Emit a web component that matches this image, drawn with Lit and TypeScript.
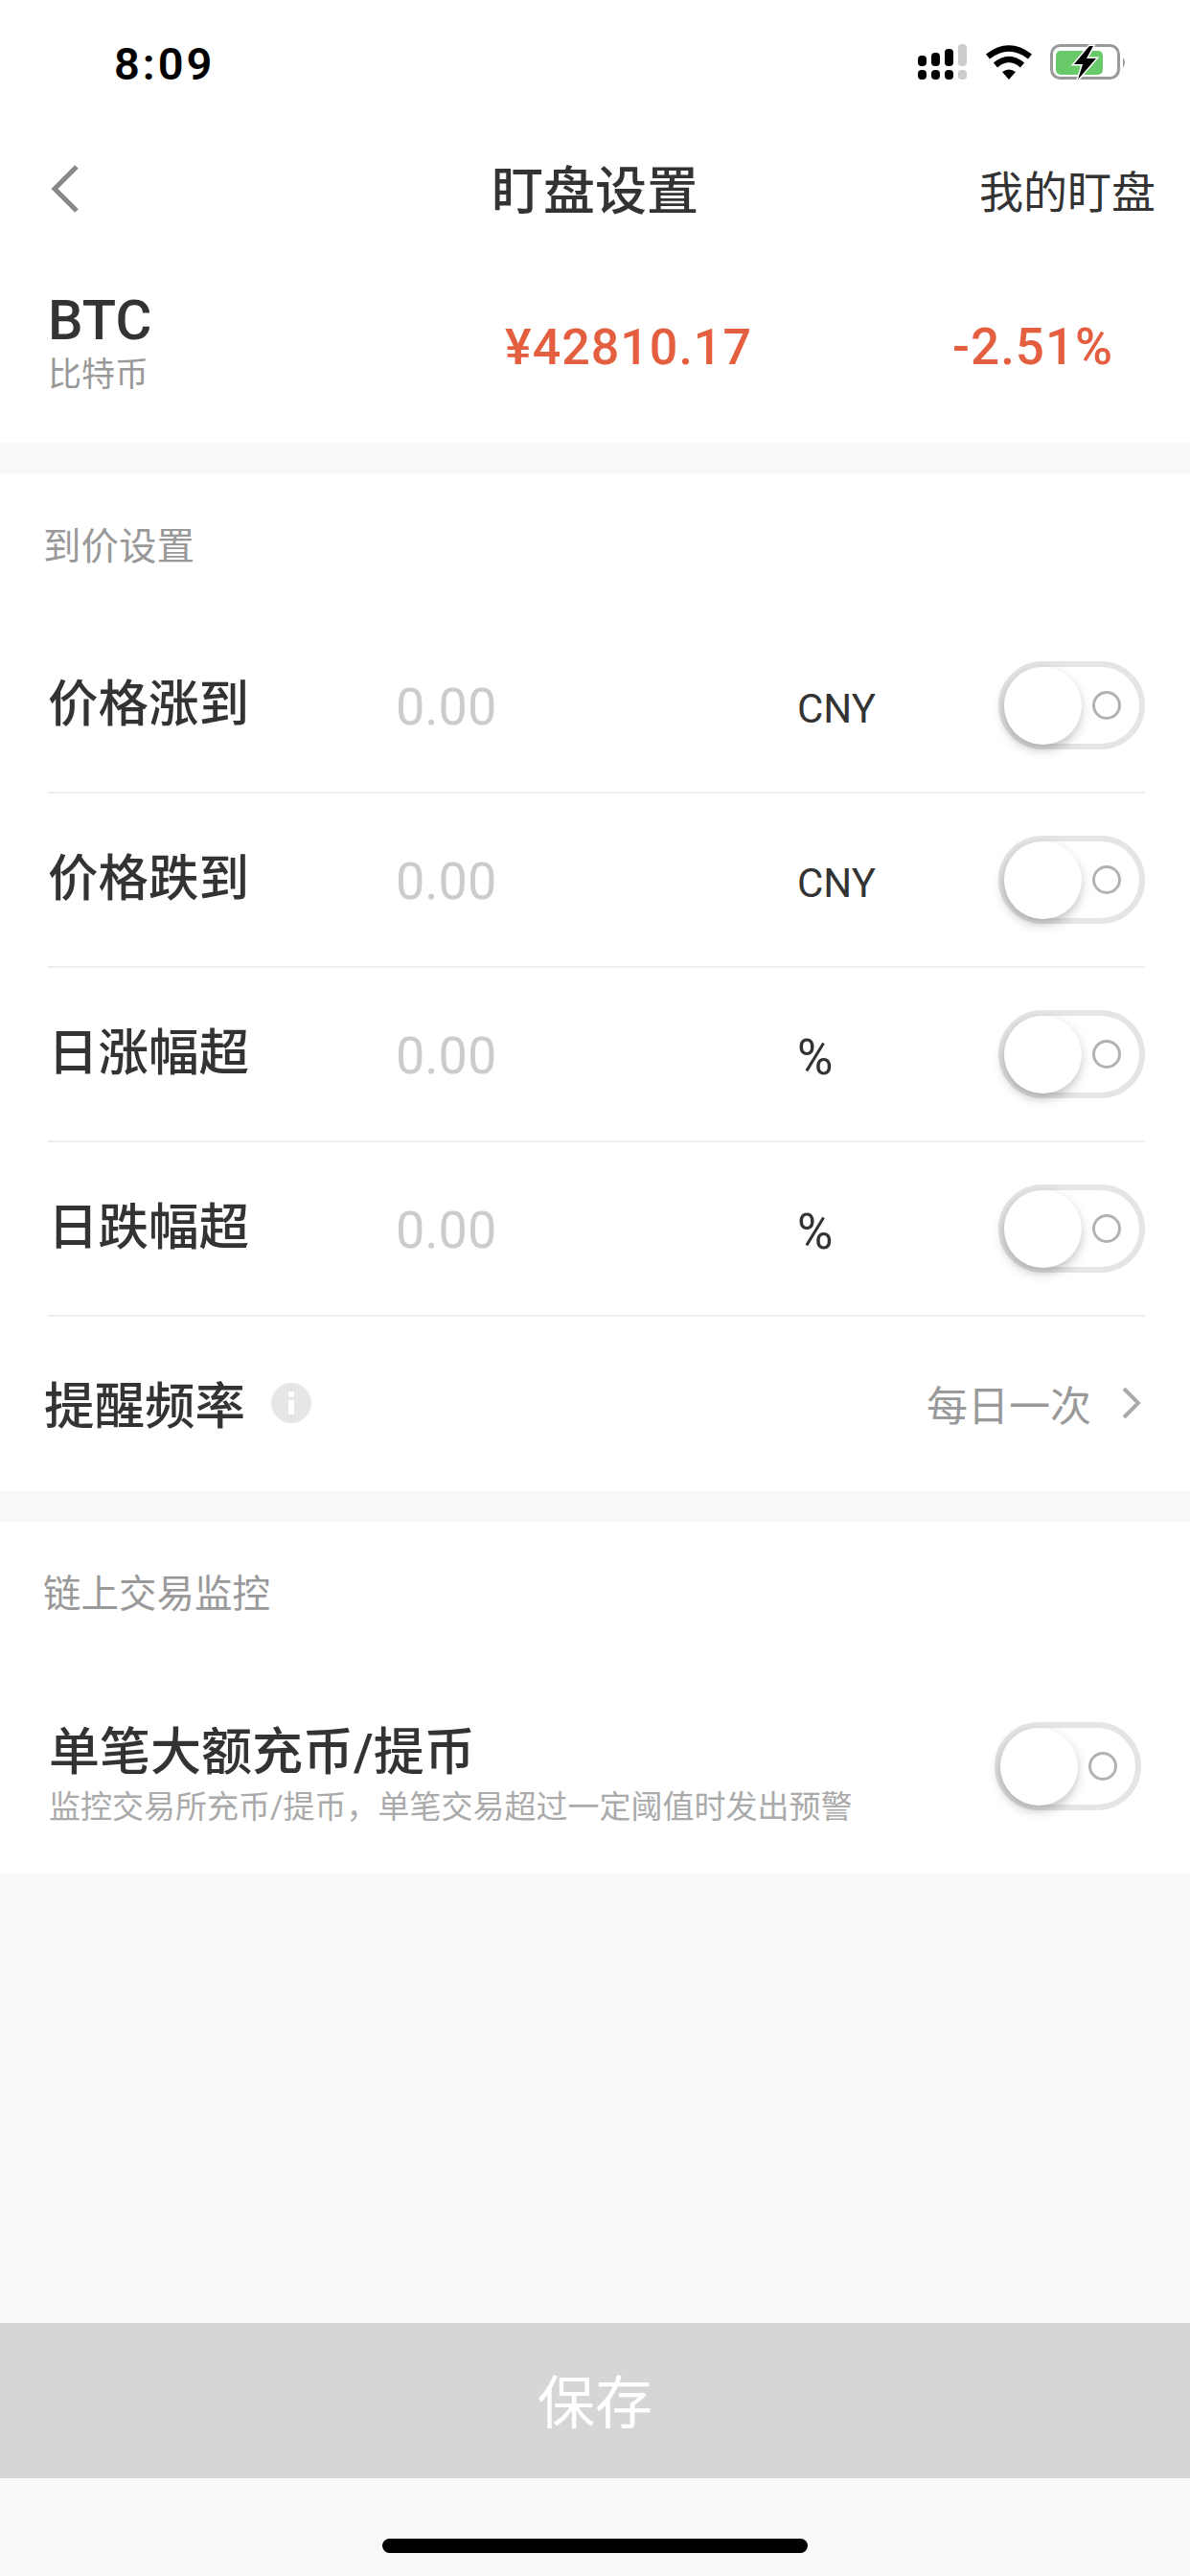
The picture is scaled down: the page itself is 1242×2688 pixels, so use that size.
import { LitElement, html, css } from "lit";
import { customElement } from "lit/decorators.js";

const statusIcons = html`<svg class="status-icons" width="230" height="50" viewBox="0 0 230 50">
  <g fill="#000">
    <rect x="0" y="12" width="9" height="11" rx="4"/><rect x="14" y="9" width="9" height="14" rx="4"/>
    <rect x="28" y="5" width="9" height="18" rx="4"/>
    <rect x="0" y="27" width="9" height="10" rx="4"/><rect x="14" y="27" width="9" height="10" rx="4"/><rect x="28" y="27" width="9" height="10" rx="4"/>
  </g>
  <rect x="42" y="0" width="9" height="23" rx="4" fill="#ccc"/><rect x="42" y="27" width="9" height="10" rx="4" fill="#ccc"/>
  <g fill="none" stroke="#000" stroke-width="6.5">
    <path d="M73 13 Q95 -4 117 13"/><path d="M81 22 Q95 10 109 22"/>
  </g>
  <path d="M88 29 Q95 24 102 29 L95 37 Z" fill="#000"/>
  <rect x="139.500" y="1.500" width="70" height="34" rx="9" fill="none" stroke="#999" stroke-width="3"/>
  <rect x="144" y="7" width="49" height="25" rx="5" fill="#68c968"/>
  <path d="M214 14 Q218 19 214 25 Z" fill="#999"/>
  <path d="M179 2 L163 21 H172 L167 37 L186 15 H176 L183 2 Z" fill="#000" stroke="#fff" stroke-width="3" paint-order="stroke"/>
</svg>`;

@customElement("app-toggle")
class AppToggle extends LitElement {
  static styles = css`
    :host { display: block; }
    .track { box-sizing: border-box; width: 153px; height: 92px; border: 6px solid #e5e5e5; border-radius: 46px; background: #fff; display: flex; align-items: center; }
    .knob { width: 81px; height: 81px; border-radius: 50%; background: #fff; box-shadow: -1px 5px 12px rgba(0,0,0,.26); flex: none; }
    .ring { box-sizing: border-box; width: 30px; height: 30px; border: 3px solid #b2b2b2; border-radius: 50%; margin-left: 11px; flex: none; }
  `;
  render() {
    return html`<div class="track"><div class="knob"></div><div class="ring"></div></div>`;
  }
}

const rows = [
  { label: "价格涨到", unit: "CNY" },
  { label: "价格跌到", unit: "CNY" },
  { label: "日涨幅超", unit: "%" },
  { label: "日跌幅超", unit: "%" },
];

@customElement("app-root")
export class AppRoot extends LitElement {
  static styles = css`
    :host { display: flex; flex-direction: column; width: 1242px; height: 2688px; background: #f9f9f9; color: #333; font-family: Roboto, "Noto Sans CJK SC", sans-serif; overflow: hidden; }
    .top { background: #fff; }
    .status { height: 132px; display: flex; justify-content: space-between; align-items: center; padding: 0 54px 0 119px; box-sizing: border-box; }
    .time { font: 600 47px/1 Roboto, sans-serif; color: #000; letter-spacing: 3px; }
    .status-icons { display: block; margin-top: 10px; }
    .nav { height: 130px; display: grid; grid-template-columns: 1fr auto 1fr; align-items: center; padding: 0 36px 0 36px; }
    .back { display: block; margin-left: 16px; }
    .title { font-size: 54px; font-weight: 500; margin-top: -3px; }
    .my { justify-self: end; font-size: 46px; }
    .coin { height: 201px; display: grid; grid-template-columns: 477px 467px 1fr; align-items: center; padding-left: 50px; box-sizing: border-box; }
    .sym { font-size: 58px; font-weight: 500; line-height: 62px; margin-top: -11px; }
    .sub { font-size: 35px; line-height: 40px; color: #999; margin-top: 7px; }
    .price, .chg { color: #e35f3f; font-size: 52px; font-weight: 500; letter-spacing: 1px; margin-top: -1px; }
    .chg { font-size: 53px; }
    .section { background: #fff; margin-top: 32px; }
    .head { box-sizing: border-box; height: 151px; padding: 56px 0 0 45px; font-size: 39.500px; line-height: 40px; color: #999; }
    .rows { padding: 0 50px; }
    .row { box-sizing: border-box; height: 182px; display: grid; grid-template-columns: 363px 419px 1fr auto; align-items: center; border-bottom: 2px solid #eee; margin-right: -3px; }
    .label { font-size: 52.500px; font-weight: 500; margin-top: -12px; }
    .ph { font-size: 54px; color: #ccc; font-weight: 400; margin-top: 3px; }
    .unit { font-size: 42px; margin-top: 6px; }
    .pct { font-size: 51px; }
    .freq { height: 182px; display: flex; align-items: center; padding: 0 50px 0 46px; }
    .freq .name { font-size: 52.500px; font-weight: 500; margin-top: -5px; }
    .info { margin-left: 27px; display: block; margin-top: -3px; }
    .spacer { flex: 1; }
    .val { font-size: 43px; color: #999; margin-right: 31px; margin-top: -3px; }
    .chev { display: block; margin-top: -3px; }
    .big { display: flex; align-items: center; justify-content: space-between; height: 216px; padding: 0 51px 0 51px; box-sizing: border-box; }
    .big-text { margin-top: 11px; }
    .big-toggle { margin-top: -8px; }
    .big-title { font-size: 53px; font-weight: 500; line-height: 60px; }
    .big-desc { font-size: 33px; line-height: 40px; color: #aaa; margin-top: 7px; }
    .save { height: 162px; background: #d6d6d6; color: #fff; font-size: 60px; display: flex; align-items: center; justify-content: center; padding-bottom: 5px; box-sizing: border-box; }
    .foot { height: 102px; display: flex; justify-content: center; }
    .bar { width: 444px; height: 15px; border-radius: 8px; background: #000; margin-top: 63px; }
  `;

  render() {
    return html`
      <div class="top">
        <div class="status"><span class="time">8:09</span>${statusIcons}</div>
        <div class="nav">
          <svg class="back" width="32" height="52" viewBox="0 0 32 52"><path d="M28 3 L5 26 L28 49" fill="none" stroke="#888" stroke-width="5"/></svg>
          <div class="title">盯盘设置</div>
          <div class="my">我的盯盘</div>
        </div>
        <div class="coin">
          <div><div class="sym">BTC</div><div class="sub">比特币</div></div>
          <div class="price">¥42810.17</div>
          <div class="chg">-2.51%</div>
        </div>
      </div>
      <div class="section">
        <div class="head">到价设置</div>
        <div class="rows">
          ${rows.map(
            (r) => html`<div class="row">
              <div class="label">${r.label}</div>
              <div class="ph">0.00</div>
              <div class=${r.unit === "%" ? "unit pct" : "unit"}>${r.unit}</div>
              <app-toggle></app-toggle>
            </div>`
          )}
        </div>
        <div class="freq">
          <span class="name">提醒频率</span>
          <svg class="info" width="42" height="42" viewBox="0 0 42 42"><circle cx="21" cy="21" r="21" fill="#e6e6e6"/><rect x="18" y="9" width="6" height="6" fill="#fff"/><rect x="18" y="18" width="6" height="15" fill="#fff"/></svg>
          <span class="spacer"></span>
          <span class="val">每日一次</span>
          <svg class="chev" width="22" height="36" viewBox="0 0 22 36"><path d="M3 3 L18 18 L3 33" fill="none" stroke="#aaa" stroke-width="4"/></svg>
        </div>
      </div>
      <div class="section">
        <div class="head">链上交易监控</div>
        <div class="big">
          <div class="big-text">
            <div class="big-title">单笔大额充币/提币</div>
            <div class="big-desc">监控交易所充币/提币，单笔交易超过一定阈值时发出预警</div>
          </div>
          <app-toggle class="big-toggle"></app-toggle>
        </div>
      </div>
      <div class="spacer"></div>
      <div class="save">保存</div>
      <div class="foot"><div class="bar"></div></div>
    `;
  }
}
